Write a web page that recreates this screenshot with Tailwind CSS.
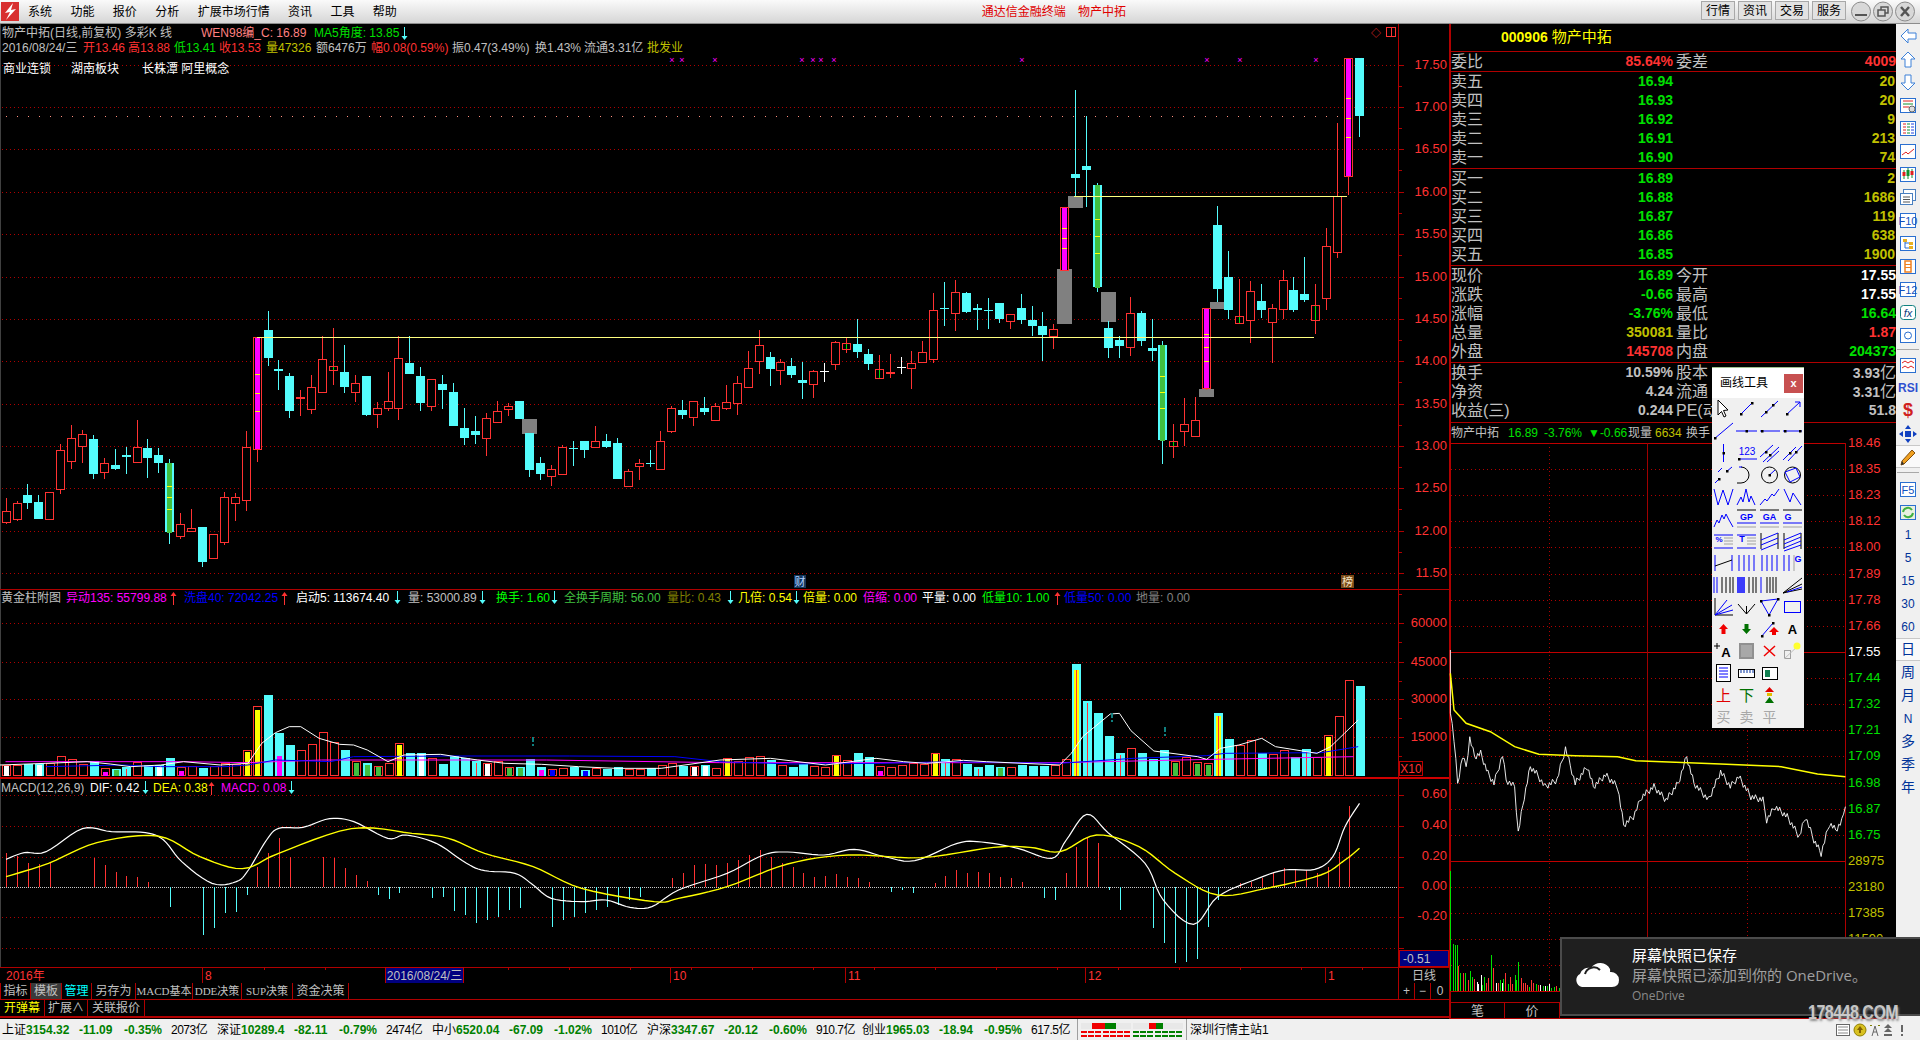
<!DOCTYPE html>
<html lang="zh-CN">
<head>
<meta charset="UTF-8">
<title>通达信金融终端 物产中拓</title>
<script src="https://cdn.jsdelivr.net/npm/@tailwindcss/browser@4"></script>
</head>
<body class="bg-black overflow-hidden font-['Liberation_Sans','Noto_Sans_CJK_SC',sans-serif]">
<div class="relative w-[1920px] h-[1040px] flex flex-col overflow-hidden">

  <!-- title bar -->
  <header class="h-6 flex items-center bg-gradient-to-b from-[#fafafa] to-[#d6d6d6] border-b border-[#8c8c8c] text-black text-[12px] shrink-0">
    <svg class="w-[18px] h-[19px] ml-[1px]" viewBox="0 0 18 19"><rect width="18" height="19" fill="#d83030"/><path d="M12 1 L4 11 L9 10 L5 18 L15 7 L10 8 Z" fill="#fff"/></svg>
    <nav class="flex gap-[18.4px] ml-[9px]">
      <span>系统</span><span>功能</span><span>报价</span><span>分析</span><span>扩展市场行情</span><span>资讯</span><span>工具</span><span>帮助</span>
    </nav>
    <div class="ml-[585px] flex gap-3 text-[#e00000]"><span>通达信金融终端</span><span>物产中拓</span></div>
    <div class="ml-auto flex gap-[3px] mr-[2px]" id="winBtns">
      <span class="w-[34px] h-[19px] flex items-center justify-center bg-[#e2e2e2] border border-[#a8a8a8]">行情</span>
      <span class="w-[34px] h-[19px] flex items-center justify-center bg-[#e2e2e2] border border-[#a8a8a8]">资讯</span>
      <span class="w-[34px] h-[19px] flex items-center justify-center bg-[#e2e2e2] border border-[#a8a8a8]">交易</span>
      <span class="w-[34px] h-[19px] flex items-center justify-center bg-[#e2e2e2] border border-[#a8a8a8]">服务</span>
      <svg class="w-[68px] h-[21px] ml-[1px]" viewBox="0 0 68 21">
        <g fill="#d8d8d8" stroke="#8a8a8a"><circle cx="11" cy="10.5" r="9.5"/><circle cx="33" cy="10.5" r="9.5"/><circle cx="55" cy="10.5" r="9.5"/></g>
        <path d="M5 14h12" stroke="#555" stroke-width="2"/>
        <path d="M28 9h7v6h-7zM31 9V6h7v6h-3" fill="none" stroke="#555" stroke-width="1.5"/>
        <path d="M51 6l8 9M59 6l-8 9" stroke="#555" stroke-width="2.5"/>
      </svg>
    </div>
  </header>

  <div class="flex flex-1 min-h-0">
    <!-- left chart column -->
    <section class="w-[1449px] shrink-0 flex flex-col relative text-[12px]">
      <svg id="chart" class="block w-[1449px] h-[959px] shrink-0" viewBox="0 24 1449 959" shape-rendering="crispEdges"></svg>

      <!-- chart legends -->
      <div class="absolute left-[2px] top-[2px] flex flex-col text-[#c0c0c0] leading-[15px]">
        <div class="flex h-[15px] items-center">
          <span class="w-[199px]">物产中拓(日线,前复权) 多彩K 线</span>
          <span class="w-[113px] text-[#ff8080]">WEN98编_C: 16.89</span>
          <span class="text-[#00e000]">MA5角度: 13.85</span>
          <svg class="w-[7px] h-[14px] ml-[2px]" viewBox="0 0 7 14"><path d="M3.5 0V12" stroke="#54fcfc"/><path d="M0.5 9h6l-3 4z" fill="#54fcfc"/></svg>
        </div>
        <div class="flex h-[15px] items-center">
          <span class="w-[81px]">2016/08/24/三</span>
          <span class="w-[45px] text-[#ff3232]">开13.46</span>
          <span class="w-[46px] text-[#ff3232]">高13.88</span>
          <span class="w-[45px] text-[#00e000]">低13.41</span>
          <span class="w-[47px] text-[#ff3232]">收13.53</span>
          <span class="w-[50px] text-[#c0c000]">量47326</span>
          <span class="w-[55px]">额6476万</span>
          <span class="w-[81px] text-[#ff3232]">幅0.08(0.59%)</span>
          <span class="w-[83px]">振0.47(3.49%)</span>
          <span class="w-[49px]">换1.43%</span>
          <span class="w-[63px]">流通3.31亿</span>
          <span class="text-[#c0c000]">批发业</span>
        </div>
        <div class="flex text-white mt-[6px] ml-[1px]">
          <span class="w-[68px]">商业连锁</span><span class="w-[71px]">湖南板块</span><span>长株潭 阿里概念</span>
        </div>
      </div>

      <div id="legendVol" class="absolute left-[1px] top-[566px] h-[15px] flex items-center"></div>
      <div id="legendMacd" class="absolute left-[1px] top-[756px] h-[15px] flex items-center"></div>

      <!-- tab rows -->
      <div class="h-[17px] flex items-stretch border-b border-[#b00000] text-[#c0c0c0] shrink-0">
        <span class="w-[31px] flex items-center justify-center border-x border-[#b00000]">指标</span>
        <span class="w-[31px] flex items-center justify-center border-r border-[#b00000] bg-[#3a3a3a]">模板</span>
        <span class="w-[30px] flex items-center justify-center border-r border-[#b00000] text-[#00ffff]">管理</span>
        <span class="w-[44px] flex items-center justify-center border-r border-[#b00000]">另存为</span>
        <span class="w-[57px] flex items-center justify-center border-r border-[#b00000] text-[11px] font-['Liberation_Serif','Noto_Sans_CJK_SC',serif]">MACD基本</span>
        <span class="w-[49px] flex items-center justify-center border-r border-[#b00000] text-[11px] font-['Liberation_Serif','Noto_Sans_CJK_SC',serif]">DDE决策</span>
        <span class="w-[51px] flex items-center justify-center border-r border-[#b00000] text-[11px] font-['Liberation_Serif','Noto_Sans_CJK_SC',serif]">SUP决策</span>
        <span class="w-[56px] flex items-center justify-center border-r border-[#b00000]">资金决策</span>
        <span class="ml-auto w-[17px] flex items-center justify-center border-x border-[#b00000]">+</span>
        <span class="w-[16px] flex items-center justify-center border-r border-[#b00000]">−</span>
        <span class="w-[18px] flex items-center justify-center">0</span>
      </div>
      <div class="h-[18px] flex items-stretch text-[#c0c0c0] border-b-2 border-[#b00000] shrink-0">
        <span class="w-[45px] flex items-center justify-center border-r border-[#b00000] text-[#ffff00]">开弹幕</span>
        <span class="w-[43px] flex items-center justify-center border-r border-[#b00000]">扩展∧</span>
        <span class="w-[57px] flex items-center justify-center border-r border-[#b00000]">关联报价</span>
      </div>
    </section>

    <!-- quote panel -->
    <section class="w-[447px] shrink-0 flex flex-col border-l-2 border-[#b00000] text-[#c0c0c0]">
      <div class="h-[27px] shrink-0 pl-[50px] flex items-center text-[#ffff00] font-bold text-[14px] gap-1"><span>000906</span><span class="font-normal text-[15px]">物产中拓</span></div>
      <div id="quotes" class="flex flex-col shrink-0"></div>
      <div class="h-[20px] shrink-0 flex items-center text-[12px]">
        <span class="w-[57px]">物产中拓</span>
        <span class="w-[36px] text-[#00e000]">16.89</span>
        <span class="w-[44px] text-[#00e000]">-3.76%</span>
        <span class="w-[40px] text-[#00e000]">▼-0.66</span>
        <span class="w-[27px]">现量</span>
        <span class="w-[31px] text-[#c0c000]">6634</span>
        <span>换手</span>
      </div>
      <svg id="tick" class="block w-[445px] h-[549px] shrink-0 overflow-visible" viewBox="1451 443 445 549" shape-rendering="crispEdges"></svg>
      <div class="h-[10px] shrink-0"></div>
      <div class="h-[17px] shrink-0 flex border-y border-[#b00000] text-[13px]">
        <span class="w-[54px] flex items-center justify-center border-r border-[#b00000]">笔</span>
        <span class="w-[55px] flex items-center justify-center border-r border-[#b00000]">价</span>
      </div>
      <div class="flex-1 border-t-2 border-[#b00000]"></div>
    </section>

    <!-- right toolbar -->
    <aside id="tools" class="w-6 shrink-0 bg-[#f0f0f0] flex flex-col items-center text-[#003399] text-[12px]"></aside>
  </div>

  <!-- status bar -->
  <footer id="status" class="h-[21px] shrink-0 bg-[#f0f0f0] flex items-center pl-[2px] text-[12px] text-black"></footer>

  <!-- draw tools panel -->
  <div class="absolute left-[1712px] top-[367px] w-[92px] h-[361px] bg-[#f0f0f0] border-t border-[#a0c090]">
    <div class="h-[30px] bg-white flex items-center justify-between pl-2 pr-[1px] text-[12px] text-black">
      <span>画线工具</span>
      <span class="w-[19px] h-[19px] bg-[#c75050] text-white font-bold flex items-center justify-center text-[11px]">x</span>
    </div>
    <div id="drawIcons" class="grid grid-cols-[repeat(4,23px)] auto-rows-[22px]"></div>
  </div>

  <!-- onedrive toast -->
  <div class="absolute left-[1560px] top-[937px] w-[360px] h-[79px] bg-[#1f1f1f] border-2 border-r-0 border-[#4b4b4b] flex">
    <svg class="w-[46px] h-[30px] mt-[19px] ml-[12px]" viewBox="0 0 46 30"><path d="M8 29 A7 7 0 0 1 6 16 A9 9 0 0 1 17 10 A11 11 0 0 1 36 11 A8 8 0 0 1 36 14 A8 8 0 0 1 45 22 Q45 29 38 29 Z" fill="#fff"/><path d="M11 16 A9 9 0 0 1 26 12" fill="none" stroke="#1f1f1f" stroke-width="2"/></svg>
    <div class="ml-[12px] mt-[6px] flex flex-col font-['Open_Sans','Noto_Sans_CJK_SC',sans-serif]">
      <span class="text-white text-[15px] leading-[20px]">屏幕快照已保存</span>
      <span class="text-[#a0a0a0] text-[15px] leading-[20px]">屏幕快照已添加到你的 OneDrive。</span>
      <span class="text-[#8a8a8a] text-[12px] leading-[22px]">OneDrive</span>
    </div>
  </div>
  <div class="absolute left-[1808px] top-[1003px] text-[16px] leading-[20px] font-bold text-[#d8d8d8]/90 tracking-[-0.5px] scale-y-125 font-['Liberation_Sans',sans-serif] [text-shadow:1px_1px_2px_#888]">178448.COM</div>
</div>

<script>
// ---- helpers
const RED = '#ff3232', CYAN = '#54fcfc', GRID = '#b00000';
const line = (a, b, c, d, col, w = 1, extra = '') => `<line x1="${a}" y1="${b}" x2="${c}" y2="${d}" stroke="${col}" stroke-width="${w}" ${extra}/>`;
const rect = (x, y, w, h, fill, stroke = 'none') => `<rect x="${x}" y="${y}" width="${w}" height="${h}" fill="${fill}" stroke="${stroke}"/>`;
const dotted = (a, b, c, d, col = GRID) => line(a, b, c, d, col, 1, 'stroke-dasharray="1 3"');
const text = (x, y, t, col, anchor = 'start', size = 12) => `<text x="${x}" y="${y}" fill="${col}" font-size="${size}" text-anchor="${anchor}" shape-rendering="auto">${t}</text>`;
const poly = (pts, col, w = 1) => `<polyline points="${pts.map(p => p.join(',')).join(' ')}" fill="none" stroke="${col}" stroke-width="${w}" shape-rendering="auto"/>`;
// catmull-rom so the moving averages don't look like straight segments
const smooth = pts => {
  const out = [];
  for (let i = 0; i < pts.length - 1; i++) {
    const p0 = pts[Math.max(i - 1, 0)], p1 = pts[i], p2 = pts[i + 1], p3 = pts[Math.min(i + 2, pts.length - 1)];
    for (let k = 0; k < 6; k++) {
      const t = k / 6, t2 = t * t, t3 = t2 * t;
      out.push([0, 1].map(n => 0.5 * (2 * p1[n] + (p2[n] - p0[n]) * t + (2 * p0[n] - 5 * p1[n] + 4 * p2[n] - p3[n]) * t2 + (3 * p1[n] - p0[n] - 3 * p2[n] + p3[n]) * t3)));
    }
  }
  out.push(pts[pts.length - 1]);
  return out;
};
// tick price: break each reading into small jagged steps
const jag = pts => {
  const out = [];
  let n = 0;
  for (let i = 0; i < pts.length - 1; i++) {
    const a = pts[i], b = pts[i + 1], steps = Math.max(1, Math.round((b[0] - a[0]) / 1.6));
    for (let k = 0; k < steps; k++) {
      n++;
      const j = ((n * 7) % 5 - 2) * 1.6;
      out.push([a[0] + (b[0] - a[0]) * k / steps, a[1] + (b[1] - a[1]) * k / steps + (i === 0 ? 0 : j)]);
    }
  }
  out.push(pts[pts.length - 1]);
  return out;
};

let s = '';
s += rect(0, 24, 1, 943, '#404040');

// ---- price pane
for (let i = 0; i < 13; i++) {
  const y = Math.round(64.7 + 42.36 * i);
  s += dotted(2, y, 1398, y);
  s += line(1398, y, 1404, y, GRID);
  s += line(1398, y + 21, 1402, y + 21, GRID);
  s += text(1447, y + 4, (17.5 - i * 0.5).toFixed(2), RED, 'end', 13);
}
for (let x = 6; x < 1340; x += 11) s += rect(x, 116, 1, 1, '#ff9080');
[672, 682, 715, 802, 813, 821, 834, 1022, 1207, 1240, 1316, 1360].forEach(x => {
  s += text(x, 63, '×', '#ff00ff', 'middle', 9);
});

// gray blocks
[[1057, 269, 1072, 324], [1068, 196, 1083, 208], [1101, 292, 1116, 322], [1199, 389, 1214, 397], [1210, 302, 1225, 309], [522, 419, 537, 434]]
  .forEach(b => { s += rect(b[0], b[1], b[2] - b[0], b[3] - b[1], '#808080'); });

// candles [x, wickTop, bodyTop, bodyBottom, wickBottom, type, ticks]
const fromZoom = (rows, ox, oy) => rows.map(r => [ox + r[0] / 3, oy + r[1] / 3, oy + r[2] / 3, oy + r[3] / 3, oy + r[4] / 3, r[5], (r[6] || []).map(t => oy + t / 3)]);
const candles = [
  ...fromZoom([
    [19,595,634,665,671,'r'],[52,603,610,656,662,'r'],[82,552,585,609,627,'c'],[115,585,606,657,657,'c'],[148,577,577,656,656,'r'],[181,433,451,566,582,'r'],[214,375,415,482,507,'r'],[247,390,403,437,489,'r'],[280,405,417,522,537,'c'],[313,474,490,515,537,'r'],[346,447,495,507,510,'c'],[379,441,465,471,522,'c'],[412,360,442,485,488,'r'],[442,417,444,474,534,'c'],[475,444,465,489,519,'c'],
    [508,477,489,696,732,'G',[559,592,628]],[541,640,673,707,717,'r'],[574,627,685,692,692,'r'],[607,681,681,786,801,'c'],[640,703,703,773,773,'r'],[673,576,592,725,735,'r'],[706,579,592,608,663,'r'],[739,393,441,599,633,'r'],
    [772,112,112,446,486,'M',[223,280,334]],[805,33,90,174,198,'c'],[835,180,207,213,270,'c'],[868,219,228,333,354,'c'],[901,270,291,297,348,'R'],[934,225,262,326,342,'r'],[967,108,178,275,276,'r'],[1000,84,198,209,255,'g'],[1033,135,216,261,279,'c'],[1066,225,250,275,306,'r'],[1099,228,228,345,348,'c'],[1132,306,325,341,384,'r'],[1165,216,304,323,333,'r'],[1195,108,175,323,360,'r'],[1228,108,189,222,222,'c'],[1261,201,228,309,333,'c'],[1294,238,238,317,333,'r'],[1327,225,252,270,327,'c'],[1360,249,276,378,378,'c'],[1393,324,384,414,435,'c'],[1426,348,393,405,432,'c']
  ], 0, 300),
  ...fromZoom([
    [19,400,415,473,528,'r'],[52,363,394,425,425,'r'],[85,369,379,386,408,'r'],[118,363,363,417,417,'c'],[148,459,459,570,591,'c'],[181,531,549,582,600,'c'],[214,555,568,587,618,'r'],[247,495,501,581,581,'r'],[280,483,504,507,558,'c'],[313,483,483,510,534,'c'],[346,438,484,500,501,'r'],[379,462,483,501,504,'c'],[412,474,489,597,597,'c'],[445,568,574,618,621,'r'],[478,537,550,557,600,'r'],[511,510,549,552,561,'c'],[541,453,484,566,567,'r'],[574,378,385,452,459,'r'],[607,360,390,405,417,'c'],[640,364,364,410,438,'r'],[673,351,384,396,405,'c'],[706,370,379,419,419,'r'],[739,315,367,384,390,'r'],[772,288,310,368,405,'r'],[805,213,265,320,321,'r'],[838,150,196,242,282,'r'],[871,216,231,267,318,'c'],[901,237,247,269,315,'r'],[934,234,258,285,294,'c'],[967,246,300,309,357,'c'],[1000,270,274,311,354,'r'],[1032,249,272,275,306,'w'],[1066,183,187,251,270,'r'],[1099,174,190,206,219,'g'],[1132,117,192,216,234,'c'],[1165,207,222,252,270,'c'],[1198,225,268,293,294,'g'],[1231,222,276,282,294,'R'],[1264,231,261,264,282,'w'],[1294,213,250,263,327,'r'],[1327,183,217,245,245,'r'],[1360,39,91,236,249,'r'],[1393,6,84,87,138,'c'],[1426,0,37,98,153,'r'],[1459,36,39,96,99,'c'],[1492,72,84,90,150,'c']
  ], 480, 280),
  ...fromZoom([
    [85,714,750,753,807,'c'],[118,729,729,777,789,'c'],[151,763,763,782,807,'r'],[184,702,744,780,792,'c'],[217,738,780,798,828,'c'],[247,756,798,825,903,'c'],[280,792,808,827,867,'r'],
    [313,441,441,630,630,'M',[505,535,565]],[346,90,342,354,410,'c'],[379,168,318,330,441,'c'],[412,369,375,681,696,'G',[478,529,580]],[445,783,804,864,894,'c'],[478,828,840,858,894,'c'],[511,711,760,860,888,'r'],[544,753,759,843,858,'c'],[577,777,864,873,903,'c'],[607,843,855,1140,1212,'G',[949,997,1045]],[640,1092,1144,1157,1194,'g'],[673,1014,1093,1112,1158,'r'],[706,1011,1081,1127,1127,'r'],[739,744,744,984,990,'M',[823,862,904]],[772,438,495,687,726,'c'],[805,573,651,750,777,'c'],[838,657,769,788,792,'g'],[871,663,694,779,849,'r'],[904,672,723,750,774,'c'],[937,732,745,785,909,'r'],[970,630,661,748,777,'r'],[1000,651,690,750,756,'c'],[1033,591,702,720,726,'c'],[1066,672,736,779,822,'g'],[1099,504,559,713,750,'r'],[1132,189,409,577,594,'r'],[1165,-6,-6,347,405,'M',[115,175,232]],[1198,-6,-6,168,231,'c']
  ], 960, 60)
];
candles.forEach(c => {
  const x = Math.round(c[0]), wt = Math.round(c[1]), bt = Math.round(c[2]), bb = Math.round(c[3]), wb = Math.round(c[4]), t = c[5];
  const px = x + 0.5;
  const wickCol = t === 'c' || t === 'G' ? CYAN : t === 'w' ? '#fff' : RED;
  if (wt < bt) s += line(px, wt, px, bt, wickCol);
  if (wb > bb) s += line(px, bb, px, wb, wickCol);
  if (t === 'c') s += rect(x - 4, bt, 9, Math.max(bb - bt, 1), CYAN);
  if (t === 'w') s += rect(x - 4, bt, 9, 1, '#fff');
  if (t === 'R') s += rect(x - 4, bt, 9, Math.max(bb - bt, 2), RED);
  if (t === 'r' || t === 'g') s += rect(x - 3.5, bt + 0.5, 8, Math.max(bb - bt, 2), '#000', RED);
  if (t === 'g') s += line(px, bt + 1, px, bb, '#00e000');
  if (t === 'M') {
    s += rect(x - 3.5, bt + 0.5, 8, bb - bt, '#000', RED) + rect(x - 2, bt + 1, 5, bb - bt - 1, '#ff00ff');
    c[6].forEach(y => { s += rect(x - 2, Math.round(y), 5, 1, '#ffff00'); });
  }
  if (t === 'G') {
    s += rect(x - 4, bt, 9, bb - bt, CYAN) + rect(x - 2, bt, 5, bb - bt + 1, '#40c040');
    c[6].forEach(y => { s += rect(x - 2, Math.round(y), 5, 1, '#ffff00'); });
  }
});

// support / resistance lines
s += line(257, 337.5, 1314, 337.5, '#ffff80');
s += line(1074, 196.5, 1347, 196.5, '#ffff80');

// small corner marks and badges
s += text(1376, 37, '◇', RED, 'middle', 10) + rect(1386.5, 27.5, 9, 9, 'none', RED) + line(1391.5, 28, 1391.5, 36, RED);
s += rect(794, 575, 12, 13, '#14365a') + text(800, 586, '财', '#b0d0ff', 'middle', 11);
s += rect(1341, 575, 13, 13, '#7a4a18') + text(1347.5, 586, '榜', '#f0e0c0', 'middle', 11);

// ---- volume pane
s += line(0, 589.5, 1449, 589.5, GRID) + line(0, 778, 1449, 778, '#d00000', 2);
[[623, '60000'], [662, '45000'], [699, '30000'], [737, '15000']].forEach(r => {
  s += dotted(2, r[0], 1398, r[0]) + line(1398, r[0], 1404, r[0], GRID) + text(1447, r[0] + 4, r[1], RED, 'end', 13);
  s += line(1398, r[0] + 19, 1402, r[0] + 19, GRID);
});
// [top in crop px, type, inner top]
const vols = [[556,'rw'],[556,'r'],[552,'c'],[552,'cw'],[549,'r'],[529,'r'],[538,'r'],[552,'r'],[543,'c'],[564,'rm',575],[567,'cg'],[561,'cx'],[547,'r'],[555,'c'],[555,'cw'],[534,'c'],[561,'rm',573],[558,'r'],[564,'c'],[558,'r'],[549,'r'],[552,'r'],[511,'ry',515],[379,'ry',390],[345,'c'],[459,'cm',528],[495,'c'],[511,'r'],[493,'r'],[456,'r'],[487,'r'],[510,'c'],[544,'rg',549],[549,'cg',555],[558,'rg',561],[549,'r'],[490,'ry',494],[519,'c'],[519,'cw'],[534,'r'],[552,'c'],[528,'c'],[534,'c'],[543,'cx'],[549,'rw',552],[543,'r'],[561,'rg',564],[561,'cg',564],[537,'c'],[561,'cm',570],[567,'rb',570],[564,'r'],[561,'c'],[570,'cb',573],[565,'r'],[567,'c'],[561,'c'],[567,'r'],[567,'r'],[564,'c'],[555,'r'],[549,'r'],[558,'c'],[558,'rw'],[555,'cw'],[564,'r'],
  [534,'ry',537],[544,'r'],[531,'r'],[528,'r'],[540,'c'],[556,'r'],[561,'c'],[552,'c'],[558,'r'],[561,'r'],[525,'ry',528],[540,'r'],[519,'c'],[531,'c'],[558,'rm',573],[561,'r'],[555,'r'],[549,'r'],[552,'r'],[519,'ry',522],[537,'cx'],[537,'r'],[552,'c'],[561,'cx'],[555,'c'],[561,'cg',564],[561,'r'],[555,'c'],[558,'c'],[558,'c'],[556,'r'],[537,'r'],[252,'cy',270],[363,'cx'],[399,'c'],[468,'c'],[519,'cx'],[504,'r'],[519,'c'],[537,'c'],[510,'c'],[544,'rg',549],[531,'r'],[546,'rg',552],[549,'rg',555],[399,'cy',408],[477,'c'],[495,'r'],[480,'r'],[519,'c'],[522,'r'],[510,'r'],[531,'c'],[507,'cx'],[531,'r'],[465,'ry',471],[408,'r'],[300,'r'],[318,'c']];
const innerCol = { w: '#fff', m: '#ff00ff', g: '#40c040', y: '#ffff00', b: '#0000ff' };
vols.forEach((v, i) => {
  const x = Math.round(6.3 + 10.92 * i), top = Math.round(580 + v[0] / 3), base = 776;
  if (v[1][0] === 'c') s += rect(x - 4, top, 9, base - top, CYAN);
  else s += rect(x - 3.5, top + 0.5, 8, base - top - 1, '#000', RED);
  const k = v[1][1];
  if (k === 'x') s += line(x + 0.5, top + 2, x + 0.5, base, RED);
  if (innerCol[k]) {
    const it = v[2] ? Math.round(580 + v[2] / 3) : top + 1;
    s += rect(x - 2, it, 5, base - it, innerCol[k]);
    if (i === 98 || i === 111) s += line(x + 0.5, it, x + 0.5, base, RED);
  }
});
const volA = p => p.map(q => [q[0] / 2.178, 580 + q[1] / 3]);
const volB = p => p.map(q => [720 + q[0] / 2.178, 580 + q[1] / 3]);
s += poly([...volA([[12,545],[400,545],[540,548],[700,540],[1190,540],[1568,548]]), ...volB([[150,548],[740,548],[1000,540],[1380,530]])], '#ff00ff');
s += poly([...volA([[100,560],[270,555],[350,560],[490,560],[540,555],[600,540],[720,545],[770,530],[980,528],[1240,528],[1470,530],[1568,545]]), ...volB([[160,552],[350,550],[500,545],[740,550],[900,535],[1060,527],[1100,520],[1310,518],[1390,500]])], '#0000ff');
s += poly([...volA([[0,555],[100,550],[190,545],[240,552],[285,560],[350,555],[400,545],[480,555],[540,550],[570,490],[600,458],[630,440],[655,440],[695,475],[740,493],[770,495],[800,510],[845,545],[880,525],[960,523],[1040,540],[1100,550],[1180,553],[1260,560],[1340,565],[1440,565]]), ...volB([[0,540],[110,535],[230,555],[340,535],[400,545],[450,550],[530,541],[580,545],[740,555],[765,520],[790,470],[850,402],[870,400],[895,452],[945,513],[1040,530],[1060,538],[1090,505],[1130,495],[1180,475],[1210,500],[1300,520],[1330,500],[1360,460],[1390,420]])], '#fff');
[[532, 737], [1111, 713], [1164, 727]].forEach(m => { s += rect(m[0], m[1], 1.5, 5, '#108080') + rect(m[0], m[1] + 7, 1.5, 2, '#108080'); });
s += rect(1399.5, 761.5, 23, 14, '#000', '#c00000') + text(1411, 773, 'X10', RED, 'middle', 12);

// ---- macd pane
[[795, '0.60'], [826, '0.40'], [857, '0.20'], [887, '0.00'], [917, '-0.20'], [948, '']].forEach(r => {
  if (r[0] === 887) s += line(0, 887.5, 1398, 887.5, '#c8c8c8', 1, 'stroke-dasharray="1 1"');
  else s += dotted(2, r[0], 1398, r[0]);
  s += line(1398, r[0], 1404, r[0], GRID);
  if (r[1]) s += text(1447, r[0] + 3, r[1], RED, 'end', 13);
});
const hist = [638,648,668,672,670,0,0,0,655,675,695,708,712,726,0,800,0,0,885,865,820,815,765,680,640,595,650,0,0,650,655,685,705,722,765,778,760,0,0,775,770,812,825,848,840,830,810,805,0,0,860,840,830,820,810,800,795,780,770,0,0,715,700,675,672,675,670,660,645,630,650,670,680,700,710,708,702,710,715,725,0,755,750,760,0,730,708,690,700,695,700,710,715,725,0,775,780,700,620,590,610,750,810,0,0,865,910,970,965,957,860,780,0,730,725,715,700,685,690,690,700,680,635,497];
hist.forEach((h, i) => {
  if (!h) return;
  const x = Math.round(6.3 + 10.92 * i) + 0.5, y = Math.round(640 + h / 3);
  s += line(x, y, x, 887, h < 742 ? RED : CYAN);
});
const mac = p => p.map(q => [q[0] / 0.8253, 640 + q[1] / 3]);
s += poly(smooth(mac([[5,658],[20,638],[38,635],[68,566],[92,575],[120,578],[135,600],[150,665],[175,730],[195,725],[205,690],[220,600],[230,565],[250,562],[272,536],[292,545],[320,595],[335,585],[360,610],[385,670],[400,692],[425,700],[440,735],[455,775],[480,785],[500,780],[520,802],[538,800],[560,750],[600,700],[630,645],[650,636],[680,645],[705,628],[730,650],[755,662],[790,610],[810,606],[840,625],[868,655],[880,600],[897,523],[915,580],[945,670],[960,780],[985,853],[1005,770],[1035,720],[1060,690],[1085,688],[1100,650],[1110,560],[1122,490]])), '#fff', 1.2);
s += poly(smooth(mac([[5,710],[40,670],[80,608],[130,588],[165,650],[200,686],[230,640],[290,566],[340,580],[370,595],[400,640],[440,680],[480,745],[540,785],[560,775],[600,740],[650,672],[700,645],[760,653],[820,622],[850,622],[875,635],[905,585],[940,620],[970,700],[1005,765],[1045,745],[1090,705],[1110,660],[1122,625]])), '#ffff00', 1.4);
s += rect(1399.5, 950.5, 49, 16, '#000080', '#c00000') + text(1403, 963, '-0.51', '#c0c0c0', 'start', 12);

// ---- frame lines + date row
s += line(1398.5, 24, 1398.5, 983, GRID) + line(0, 967.5, 1449, 967.5, GRID) + line(1449, 24, 1449, 983, GRID);
[202, 670, 845, 1085, 1325].forEach(x => { s += line(x + 0.5, 967, x + 0.5, 983, GRID); });
for (let x = 264; x < 1398; x += 61) s += line(x, 968, x, 970, GRID);
s += text(6, 980, '2016年', RED) + text(205, 980, '8', RED) + text(673, 980, '10', RED) + text(848, 980, '11', RED) + text(1088, 980, '12', RED) + text(1328, 980, '1', RED);
s += rect(385.5, 967.5, 78, 16, '#000080', '#c00000') + text(424.5, 980, '2016/08/24/三', '#c0c0c0', 'middle');
s += text(1424, 980, '日线', '#c0c0c0', 'middle');
document.getElementById('chart').innerHTML = s;

// ---- legends (text, colour, arrow)
const arrow = col => col === 'up'
  ? '<svg class="w-[7px] h-[14px] shrink-0" viewBox="0 0 7 14"><path d="M3.5 2V14" stroke="#ff3232"/><path d="M0.5 5h6l-3-4z" fill="#ff3232"/></svg>'
  : '<svg class="w-[7px] h-[14px] shrink-0" viewBox="0 0 7 14"><path d="M3.5 0V12" stroke="#54fcfc"/><path d="M0.5 9h6l-3 4z" fill="#54fcfc"/></svg>';
const legend = (id, items) => {
  document.getElementById(id).innerHTML = items.map(i => `<span class="text-[12px] whitespace-nowrap shrink-0" style="color:${i[1]};width:${i[2]}px">${i[0]}</span>` + (i[3] ? arrow(i[3]) : '') + `<span class="shrink-0" style="width:${i[4] || 0}px"></span>`).join('');
};
legend('legendVol', [
  ['黄金柱附图', '#c0c0c0', 65],
  ['异动135: 55799.88', '#ff00ff', 104, 'up', 7], ['洗盘40: 72042.25', '#0000ff', 97, 'up', 8],
  ['启动5: 113674.40', '#fff', 98, 'down', 7], ['量: 53000.89', '#c0c0c0', 71, 'down', 10],
  ['换手: 1.60', '#00ff00', 55, 'down', 6], ['全换手周期: 56.00', '#40c040', 103, '', 0], ['量比: 0.43', '#808000', 60, 'down', 4],
  ['几倍: 0.54', '#ffff00', 55, 'down', 3], ['倍量: 0.00', '#ffff00', 60], ['倍缩: 0.00', '#ff00ff', 59], ['平量: 0.00', '#fff', 60],
  ['低量10: 1.00', '#00ff00', 72, 'up', 3], ['低量50: 0.00', '#0000ff', 72], ['地量: 0.00', '#808080', 60]
]);
legend('legendMacd', [
  ['MACD(12,26,9)', '#c0c0c0', 89], ['DIF: 0.42', '#fff', 52, 'down', 4], ['DEA: 0.38', '#ffff00', 55, 'up', 6], ['MACD: 0.08', '#ff00ff', 67, 'down']
]);

// ---- quote table
const G = '#00e000', Y = '#c0c000', W = '#fff', R = RED, A = '#c0c0c0';
const row = (l, v, vc, l2, v2, v2c) => `<div class="flex h-[19px] items-center">
  <div class="w-[222px] flex justify-between items-center"><span class="text-[16px] leading-[19px] whitespace-nowrap">${l}</span><span class="font-bold text-[14px]" style="color:${vc}">${v}</span></div>
  <div class="w-[220px] ml-[3px] flex justify-between items-center"><span class="text-[16px] leading-[19px] whitespace-nowrap">${l2}</span><span class="font-bold text-[14px] whitespace-nowrap" style="color:${v2c}">${v2}</span></div>
</div>`;
const row1 = (l, v, v2, vc) => `<div class="flex h-[19px] items-center"><div class="w-[222px] flex justify-between items-center"><span class="text-[16px] leading-[19px]">${l}</span><span class="font-bold text-[14px] text-[#00e000]">${v}</span></div><span class="ml-auto mr-[1px] font-bold text-[14px] text-[#c0c000]">${v2}</span></div>`;
const yi = n => `${n}<span class="text-[16px] font-normal">亿</span>`;
document.getElementById('quotes').innerHTML =
  `<div class="border-y border-[#b00000] h-[21px] flex flex-col justify-center">${row('委比', '85.64%', R, '委差', '4009', R)}</div>` +
  `<div class="border-b border-[#b00000] h-[97px] flex flex-col">` +
    [['卖五','16.94','20'],['卖四','16.93','20'],['卖三','16.92','9'],['卖二','16.91','213'],['卖一','16.90','74']].map(r => row1(...r)).join('') + `</div>` +
  `<div class="border-b border-[#b00000] h-[97px] flex flex-col">` +
    [['买一','16.89','2'],['买二','16.88','1686'],['买三','16.87','119'],['买四','16.86','638'],['买五','16.85','1900']].map(r => row1(...r)).join('') + `</div>` +
  `<div class="border-b border-[#b00000] h-[97px] flex flex-col">` +
    row('现价', '16.89', G, '今开', '17.55', W) + row('涨跌', '-0.66', G, '最高', '17.55', W) + row('涨幅', '-3.76%', G, '最低', '16.64', G) +
    row('总量', '350081', Y, '量比', '1.87', R) + row('外盘', '145708', R, '内盘', '204373', G) + `</div>` +
  `<div class="border-b border-[#b00000] h-[60px] flex flex-col">` +
    row('换手', '10.59%', A, '股本', yi('3.93'), A) + row('净资', '4.24', A, '流通', yi('3.31'), A) + row('收益(三)', '0.244', A, 'PE(动)', '51.8', A) + `</div>`;

// ---- tick chart
let t = '';
const labels = ['18.46','18.35','18.23','18.12','18.00','17.89','17.78','17.66','17.55','17.44','17.32','17.21','17.09','16.98','16.87','16.75','28975','23180','17385','11590'];
labels.forEach((l, i) => {
  const y = Math.round(443 + 26.12 * i);
  t += (i === 0 || i === 8 || i === 16) ? line(1451, y + 0.5, 1845, y + 0.5, '#c00000') : dotted(1451, y, 1845, y);
  t += text(1848, y + 4, l, i < 8 ? RED : i === 8 ? W : i < 16 ? '#00e000' : Y, 'start', 13);
});
for (let y = 965; y < 992; y += 26) t += dotted(1451, y, 1845, y);
t += line(1451, 991.5, 1845, 991.5, '#c00000');
t += dotted(1549, 443, 1549, 991) + dotted(1747, 443, 1747, 991) + line(1647.5, 443, 1647.5, 991, '#a00000') + line(1845.5, 443, 1845.5, 991, GRID);
// volume sticks
[[31,33,'g'],[38,252,'g'],[45,256,'g'],[52,255,'g'],[55,318,'r'],[61,340,'g'],[68,340,'r'],[74,338,'g'],[76,352,'g'],[83,360,'r'],[90,333,'g'],[97,350,'g'],[103,358,'r'],[111,367,'w'],[115,372,'w'],[122,345,'w'],[127,375,'g'],[132,350,'g'],[138,370,'r'],[145,355,'r'],[154,285,'g'],[160,323,'r'],[167,370,'w'],[174,370,'r'],[181,360,'g'],[186,368,'w'],[190,358,'g'],[196,340,'r'],[203,372,'g'],[210,352,'r'],[217,372,'r'],[226,345,'g'],[229,360,'g'],[235,305,'g'],[243,355,'r'],[248,368,'r'],[255,370,'r'],[260,375,'r'],[267,380,'g'],[274,360,'r'],[280,368,'r'],[288,372,'g'],[295,375,'r'],[300,375,'w'],[308,378,'g'],[315,378,'w'],[320,378,'g'],[326,372,'w'],[333,385,'g'],[341,380,'g'],[348,378,'r'],[356,385,'g']]
  .forEach(b => { const x = Math.round(1440 + b[0] / 3) + 0.5; t += line(x, Math.round(860 + b[1] / 3), x, 991, { g: '#00e000', r: RED, w: W }[b[2]]); });
// price + average line
const tk = p => p.map(q => [q[0] / 0.8253, 640 + q[1] / 3]);
const white = tk([[1197,30],[1197,210],[1200,300],[1203,430],[1207,350],[1210,380],[1213,295],[1217,350],[1222,340],[1228,400],[1233,430],[1240,345],[1243,420],[1250,440],[1253,578],[1258,470],[1263,380],[1268,400],[1275,440],[1285,420],[1292,325],[1300,430],[1310,380],[1315,440],[1325,405],[1335,440],[1340,555],[1348,530],[1355,470],[1365,440],[1375,480],[1385,430],[1392,350],[1398,430],[1410,480],[1420,395],[1428,440],[1435,410],[1445,470],[1455,480],[1458,540],[1465,500],[1475,530],[1485,590],[1490,530],[1497,600],[1503,640],[1510,550],[1515,570],[1520,545],[1523,500]]);
t += poly(jag(white), W, 0.9);
t += poly(tk([[1197,100],[1200,210],[1210,250],[1230,275],[1250,320],[1270,343],[1300,347],[1335,350],[1350,362],[1420,372],[1470,380],[1500,402],[1523,410]]), '#ffff00', 1.5);
document.getElementById('tick').innerHTML = t;

// ---- right toolbar
const ic = (inner, vb = '0 0 20 20') => `<div class="h-[23px] w-6 flex items-center justify-center shrink-0"><svg class="w-5 h-5" viewBox="${vb}">${inner}</svg></div>`;
const box = inner => `<rect x="2.5" y="3.5" width="15" height="14" fill="#fff" stroke="#2a6fd0"/>${inner}`;
const lab = (t, cls = '') => `<div class="h-[23px] w-6 flex items-center justify-center shrink-0 ${cls}">${t}</div>`;
const sep = h => `<div class="w-[22px] shrink-0 flex items-center" style="height:${h}px"><div class="w-full h-px bg-[#a8a8a8]"></div></div>`;
const colored = `<path d="M5 6h3M5 9h3M5 12h3M5 15h3" stroke="#e02020"/><path d="M9 6h3M9 9h3M9 12h3M9 15h3" stroke="#109030"/><path d="M13 6h3M13 9h3M13 12h3M13 15h3" stroke="#2040e0"/>`;
document.getElementById('tools').innerHTML = [
  ic('<path d="M3 10l7-7v4h8v6h-8v4z" fill="#fff" stroke="#3c80d8"/>'),
  ic('<path d="M10 3l7 7h-4v8H7v-8H3z" fill="#fff" stroke="#3c80d8"/>'),
  ic('<path d="M10 18l7-7h-4V3H7v8H3z" fill="#fff" stroke="#3c80d8"/>'),
  ic(box(`<path d="M5 6h10" stroke="#e02020"/><path d="M5 9h10" stroke="#109030"/><path d="M5 12h6" stroke="#e02020"/><circle cx="14" cy="14" r="3" fill="#ddd" stroke="#666"/>`)),
  ic(box(colored)),
  ic(box('<path d="M4 14l4-3 2 2 6-5" fill="none" stroke="#e02020"/>')),
  ic(box('<path d="M6 6v9M10 4v11M14 5v9" stroke="#109030"/><rect x="4.5" y="8" width="3" height="4" fill="#e02020"/><rect x="8.5" y="6" width="3" height="6" fill="#109030"/><rect x="12.5" y="7" width="3" height="4" fill="#e02020"/>')),
  ic('<rect x="5.5" y="2.5" width="12" height="11" fill="#fff" stroke="#4a80c0"/><rect x="2.5" y="6.5" width="12" height="11" fill="#fff" stroke="#4a80c0"/><path d="M5 10h7M5 12.5h7M5 15h7" stroke="#555"/>'),
  ic(box('<text x="10" y="15" text-anchor="middle" font-size="11" fill="#1050c0">F10</text>')),
  ic(box('<rect x="5" y="6" width="4" height="3" fill="#e8b020"/><rect x="11" y="9" width="4" height="3" fill="#e8b020"/><rect x="11" y="13" width="4" height="3" fill="#e8b020"/><path d="M7 9v6h4M7 10h4" fill="none" stroke="#2a6fd0"/>')),
  ic(box('<rect x="7" y="5" width="6" height="11" fill="none" stroke="#f08020" stroke-width="1.5"/><path d="M7 8.5h6M7 11.5h6" stroke="#f08020"/>')),
  ic(box('<text x="10" y="15" text-anchor="middle" font-size="11" fill="#1050c0">F12</text>')),
  ic('<rect x="2.5" y="3.5" width="15" height="14" rx="3" fill="#fff" stroke="#108080"/><text x="10" y="15" text-anchor="middle" font-size="11" font-style="italic" fill="#104080">fx</text>'),
  ic(box('<circle cx="10" cy="10.5" r="3.5" fill="none" stroke="#2a6fd0"/>')),
  sep(7),
  ic(box('<path d="M4 8l3-2 3 2 3-2 3 2M4 13l3-2 3 2 3-2 3 2" fill="none" stroke="#e02020"/>')),
  lab('<span class="font-bold text-[12px] text-[#3050d0]">RSI</span>'),
  lab('<span class="font-bold text-[18px] text-[#d02020]">$</span>'),
  ic('<path d="M10 1l3 4H7zM10 19l3-4H7zM1 10l4-3v6zM19 10l-4-3v6z" fill="#1040c0"/><rect x="7" y="7" width="6" height="6" fill="#1040c0"/>'),
  `<div class="h-[23px] w-6 flex items-center justify-center shrink-0 bg-[#fafafa] border-y border-[#c8c8c8]"><svg class="w-5 h-5" viewBox="0 0 20 20"><path d="M4 14L14 3l3 3L6 17l-3 1z" fill="#f0a020" stroke="#805010"/><path d="M3 18l1-4 2 3z" fill="#333"/></svg></div>`,
  sep(9),
  ic(box('<text x="10" y="15" text-anchor="middle" font-size="11" fill="#1050c0">F5</text>')),
  ic('<rect x="2.5" y="3.5" width="15" height="14" fill="#e8f0e0" stroke="#2a6fd0"/><path d="M5 10a5 5 0 0 1 9-2M15 11a5 5 0 0 1-9 2" fill="none" stroke="#40b040" stroke-width="2"/>'),
  lab('1'), lab('5'), lab('15'), lab('30'), lab('60'),
  `<div class="h-[23px] w-6 flex items-center justify-center shrink-0 bg-[#fafafa] border-y border-[#c8c8c8] text-[14px]">日</div>`,
  lab('周', 'text-[14px]'), lab('月', 'text-[14px]'), lab('N'), lab('多', 'text-[14px]'), lab('季', 'text-[14px]'), lab('年', 'text-[14px]')
].join('');

// ---- draw tool icons
const BL = '#0000ff', BK = '#000';
const p = (d, c = BL, w = 1) => `<path d="${d}" fill="none" stroke="${c}" stroke-width="${w}"/>`;
const dt = (x, y) => `<rect x="${x - 1}" y="${y - 1}" width="2.5" height="2.5" fill="#000"/>`;
const tx = (x, y, v, c, size, bold = 1) => `<text x="${x}" y="${y}" fill="${c}" font-size="${size}" text-anchor="middle" ${bold ? 'font-weight="bold"' : ''}>${v}</text>`;
const lines3 = p('M2 2h19', BK) + p('M2 15h19') + p('M2 19h19', '#a0a0a0');
const txtLines = p('M2 5h19') + p('M12 8h9M12 11h9M12 14h9', '#a0a0a0') + p('M2 18h19');
const vs = (xs, c = BL, w = 1) => xs.map(x => p(`M${x} 3V19`, c, w)).join('');
const drawIcons = [
  '<path d="M6 2V17L9.5 13.5 12 19 14 18 11.5 12.5 16 12Z" fill="#fff" stroke="#000"/>',
  p('M5 17L17 5') + dt(6, 16) + dt(17, 5),
  p('M3 19L20 3') + dt(8, 14) + dt(15, 7),
  p('M5 17L19 4M14 4h5v5') + dt(6, 16),
  p('M2 19L21 3') + dt(3, 18),
  p('M1 11h21') + dt(11.5, 11),
  p('M2 11h20') + dt(4, 11),
  p('M2 11h19') + dt(4, 11) + dt(19, 11),
  p('M11.5 2V20') + dt(11.5, 11),
  tx(12, 13, '123', BL, 10, 0) + p('M3 17h19') + dt(4, 17),
  p('M2 15L15 3M5 20L21 5M9 20L21 9') + dt(8, 10) + dt(12, 13),
  p('M2 18L15 5M7 19L21 4') + dt(9, 11) + dt(15, 10),
  p('M3 19L8 14M14 8L20 3', BL) + dt(7, 15) + dt(15, 7) + p('M6 8L10 4', BL),
  p('M6 3A8 8 0 0 1 6 19M2 19h4', BK) + p('M4 3h3'),
  '<circle cx="11.5" cy="11" r="8" fill="none" stroke="#000"/>' + p('M11.5 11L17 6') + dt(11.5, 11),
  '<circle cx="11.5" cy="11" r="8" fill="none" stroke="#000"/>' + p('M4 8L15 4 19 13 9 18Z'),
  p('M2 3L6 19 11 4 16 19 21 3'),
  p('M2 19L6 11 8 16 11 3 14 16 16 10 20 19'),
  p('M2 19L7 13 9 15 14 8 16 10 21 3'),
  p('M3 3L9 16 12 7 20 19'),
  p('M2 19L5 12 7 15 10 7 12 11 14 6 17 12 21 19'),
  tx(11.5, 12, 'GP', BL, 9) + lines3,
  tx(11.5, 12, 'GA', BL, 9) + lines3,
  tx(7, 12, 'G', BL, 9) + lines3,
  tx(7, 12, '%', BL, 8) + txtLines,
  tx(7, 12, 'T', BL, 9) + txtLines,
  vs([3, 20], BK) + p('M3 10L20 3M3 15L20 8M3 20L20 13'),
  vs([3, 20], BK) + p('M3 10L20 3M3 14L20 7M3 18L20 11M3 21L20 15'),
  vs([3, 20]) + p('M3 14L20 8', BK),
  vs([4, 9, 14, 19]),
  vs([4, 9, 14, 19]),
  vs([3, 8]) + vs([13], '#a0a0a0') + tx(17, 10, 'G', BL, 9),
  vs([2, 5], BL) + vs([10, 14, 18, 21], BK),
  vs([3, 5, 7, 9], BL, 1.5) + vs([14, 18, 21], BK),
  vs([3]) + vs([9, 12, 15, 18], BK),
  p('M2 19L21 4M2 19L21 10M2 19L21 15', BK) + p('M6 18L21 13'),
  p('M3 2V19H21', BK) + p('M3 19L15 4M3 19L20 9M3 19L21 14'),
  p('M11.5 18L3 8M11.5 18L20 8', BK) + p('M11.5 18V10', BK),
  p('M3 5L20 3 11 19Z') + dt(3, 5) + dt(20, 3) + dt(11, 19),
  `<rect x="3.5" y="5.5" width="16" height="11" fill="none" stroke="#0000ff"/>`,
  '<path d="M11.5 6L16 11H13.5V16H9.5V11H7Z" fill="#f00000"/>',
  '<path d="M11.5 16L16 11H13.5V6H9.5V11H7Z" fill="#007000"/>',
  p('M3 19L15 5') + dt(4, 18) + dt(15, 5) + '<path d="M16 9L21 14H18V17H14V14H11Z" fill="#f00000"/>',
  tx(11.5, 16, 'A', BK, 13),
  tx(14, 17, 'A', BK, 13) + p('M2 6h6M5 3v6', BK),
  '<rect x="5" y="4" width="13" height="14" fill="#a8a8a8" stroke="#909090" stroke-width="2"/>',
  p('M6 6L17 16M17 6L6 16', '#f00000', 1.5),
  '<rect x="3.5" y="10.5" width="6" height="8" fill="none" stroke="#a0a0a0"/>' + p('M3 19L18 5', '#c0c0c0') + '<circle cx="16" cy="6" r="3.5" fill="#ffff30"/>',
  '<rect x="4.5" y="2.5" width="14" height="17" fill="#fff" stroke="#000"/>' + p('M7 6h9M7 9h9M7 12h9M7 15h9'),
  '<rect x="3.5" y="7.5" width="16" height="8" fill="#fff" stroke="#000"/>' + p('M6 8v3M9 8v3M12 8v3M15 8v3M18 8v3', '#0030a0'),
  '<rect x="4.5" y="5.5" width="15" height="12" fill="#fff" stroke="#000"/><rect x="7" y="8" width="5" height="7" fill="#108050"/>',
  '',
  tx(11.5, 17, '上', '#e00000', 15, 0),
  tx(11.5, 17, '下', '#007000', 15, 0),
  '<path d="M11.5 3L16 8H7Z" fill="#e00000"/><rect x="9" y="9" width="5" height="3" fill="#e0c000"/><path d="M11.5 13L16 19H7Z" fill="#007000"/>',
  '',
  tx(11.5, 16, '买', '#a8a8a8', 14, 0),
  tx(11.5, 16, '卖', '#a8a8a8', 14, 0),
  tx(11.5, 16, '平', '#a8a8a8', 14, 0),
  ''
];
document.getElementById('drawIcons').innerHTML = drawIcons.map(i => `<svg class="w-[23px] h-[22px]" viewBox="0 0 23 22">${i}</svg>`).join('');

// ---- status bar
const idx = [
  ['上证','3154.32','-11.09','-0.35%','2073亿'], ['深证','10289.4','-82.11','-0.79%','2474亿'], ['中小','6520.04','-67.09','-1.02%','1010亿'],
  ['沪深','3347.67','-20.12','-0.60%','910.7亿'], ['创业','1965.03','-18.94','-0.95%','617.5亿']
];
const cells = n => Array.from({ length: n }, (_, i) => i);
const meter = (col, r1, r2, g1) => `<svg class="w-[50px] h-[14px]" viewBox="0 0 50 14" shape-rendering="crispEdges">
  <rect width="50" height="6" fill="#e8e8e8"/><rect x="${r1}" width="${r2}" height="6" fill="#f00000"/><rect x="${r1 + r2}" width="${g1}" height="6" fill="#008000"/>
  ${cells(7).map(i => `<rect x="${i * 7.2}" y="8" width="6" height="2" fill="${col}"/><rect x="${i * 7.2}" y="12" width="6" height="2" fill="${col}"/>`).join('')}</svg>`;
document.getElementById('status').innerHTML = idx.map(r => `<div class="w-[215px] shrink-0 flex items-center whitespace-nowrap">
    <span class="w-[24px]">${r[0]}</span>
    <span class="w-[53px] font-bold text-[#008000]">${r[1]}</span>
    <span class="w-[45px] font-bold text-[#008000]">${r[2]}</span>
    <span class="w-[47px] font-bold text-[#008000]">${r[3]}</span>
    <span class="w-[44px] tracking-[-0.5px]">${r[4]}</span>
  </div>`).join('') + `<div class="flex items-center h-full border-x border-[#a0a0a0] px-[3px] gap-[2px]">${meter('#f00000', 11, 13, 11)}${meter('#008000', 16, 7, 7)}</div>
  <span class="ml-[3px]">深圳行情主站1</span>
  <svg class="ml-auto mr-[16px] w-[68px] h-[14px]" viewBox="0 0 68 14">
    <rect x="0.5" y="1.5" width="13" height="11" fill="#fff" stroke="#666"/><path d="M2 4h10M2 7h10M2 10h10" stroke="#888"/>
    <circle cx="24" cy="7" r="6" fill="#d8c020" stroke="#908000"/><path d="M24 3l3 4h-2v3h-2V7h-2z" fill="#806000"/>
    <path d="M36 13L39 3 42 13M37 9h4" fill="none" stroke="#666"/><path d="M34 3q1-2 2 0M42 3q1-2 2 0" fill="none" stroke="#808000"/>
    <path d="M52 1l4 4h-8zM52 5l4 4h-8zM48 11h8v2h-8z" fill="#666"/>
    <rect x="65" y="2" width="2" height="7" fill="#666"/><rect x="65" y="11" width="2" height="2" fill="#666"/>
  </svg>`;
</script>
</body>
</html>
